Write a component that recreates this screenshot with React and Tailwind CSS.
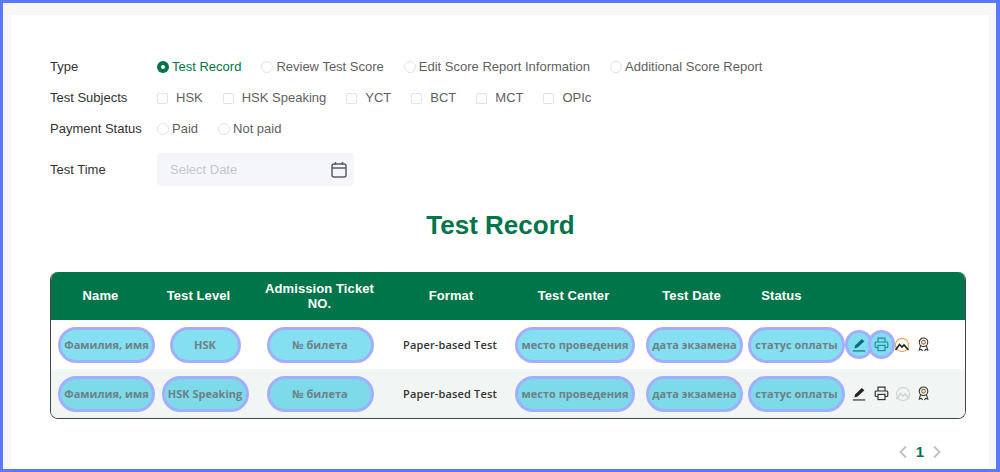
import React from "react";

const Radio = ({ label, on }) => (
  <label className="flex items-center">
    {on ? (
      <span className="w-3 h-3 rounded-full bg-[#00754a] flex items-center justify-center">
        <span className="w-1 h-1 rounded-full bg-white" />
      </span>
    ) : (
      <span className="w-3 h-3 rounded-full border border-[#e0e2e8] bg-white" />
    )}
    <span className={`ml-[3px] ${on ? "text-[#00754a]" : "text-[#5f5f5f]"}`}>{label}</span>
  </label>
);

const Check = ({ label }) => (
  <label className="flex items-center">
    <span className="w-[11px] h-[11px] rounded-[2px] border border-[#e0e2e8] bg-white" />
    <span className="ml-[8px] mr-[1px] text-[#5f5f5f]">{label}</span>
  </label>
);

const Pill = ({ children, w, bg }) => (
  <span className={`h-[36px] pt-[1px] shrink-0 flex items-center justify-center rounded-full ${bg} border-[3px] border-[#a3aefc] text-[11px] font-bold text-[#6f7f88] font-['Open_Sans',sans-serif] whitespace-nowrap ${w}`}>
    {children}
  </span>
);

const Pencil = () => (
  <svg width="14" height="14" viewBox="0 0 14 14" fill="currentColor">
    <path d="M9.8 1l2.6 2.3-6.8 6.2-3.2.9.9-3.1z" />
    <rect x="0.8" y="12.4" width="12.4" height="1.1" />
  </svg>
);
const Printer = () => (
  <svg width="15" height="15" viewBox="0 0 15 15" fill="none" stroke="currentColor" strokeWidth="1.2">
    <path d="M4 5V1.2h7V5" />
    <path d="M4 10.5H2.2a1 1 0 0 1-1-1V6a1 1 0 0 1 1-1h10.6a1 1 0 0 1 1 1v3.5a1 1 0 0 1-1 1H11" />
    <rect x="4" y="8.4" width="7" height="5.2" />
  </svg>
);
const Mountain = ({ faded }) => (
  <svg width="16" height="16" viewBox="0 0 16 16" fill="none">
    <circle cx="8" cy="8" r="6.6" stroke={faded ? "#d0d4d4" : "#efa751"} strokeWidth="1.2" />
    <path d="M1.5 13L5.5 7.5l2.5 2.5 2-2 4.5 5" stroke={faded ? "#d0d4d4" : "#222"} strokeWidth="1.6" />
  </svg>
);
const Award = () => (
  <svg width="13" height="15" viewBox="0 0 14 16" fill="none" stroke="#333" strokeWidth="1.2">
    <circle cx="7" cy="5.6" r="4.6" />
    <circle cx="7" cy="5.6" r="2" stroke="#a86a30" />
    <path d="M3.8 9.4L2.4 14l2.4-.8L6 15M10.2 9.4l1.4 4.6-2.4-.8L8 15" />
  </svg>
);

const Row = ({ level, levelW, active, bg, pill }) => (
  <div className={`flex items-center h-[49px] pl-[7px] ${bg}`}>
    <Pill w="w-[97px]" bg={pill}>Фамилия, имя</Pill>
    <div className="w-[100px] flex justify-center"><Pill w={levelW} bg={pill}>{level}</Pill></div>
    <div className="w-[130px] flex justify-center"><Pill w="w-[107px]" bg={pill}>№ билета</Pill></div>
    <div className="w-[130px] pt-[1px] text-center text-[11px] tracking-[0.15px] font-semibold text-[#333] font-['Open_Sans',sans-serif] whitespace-nowrap">Paper-based Test</div>
    <Pill w="w-[120px]" bg={pill}>место проведения</Pill>
    <Pill w="w-[97px] ml-[11px]" bg={pill}>дата экзамена</Pill>
    <Pill w="w-[97px] ml-[5px]" bg={pill}>статус оплаты</Pill>
    <div className="flex items-center">
      {active ? (
        <>
          <span className="w-[28px] h-[29px] rounded-full bg-[#80deef] border-[3px] border-[#a3aefc] text-[#0b6b7a] flex items-center justify-center"><Pencil /></span>
          <span className="w-[27px] h-[29px] -ml-[5px] rounded-full bg-[#80deef] border-[3px] border-[#a3aefc] text-[#2a8a9a] flex items-center justify-center"><Printer /></span>
          <span className="ml-[-1px] flex"><Mountain /></span>
          <span className="ml-[7px] flex"><Award /></span>
        </>
      ) : (
        <>
          <span className="ml-[7px] flex text-[#222]"><Pencil /></span>
          <span className="ml-[8px] flex text-[#333]"><Printer /></span>
          <span className="ml-[6px] flex"><Mountain faded /></span>
          <span className="ml-[6px] flex"><Award /></span>
        </>
      )}
    </div>
  </div>
);

export default function App() {
  return (
    <div className="w-[1000px] h-[472px] overflow-hidden border-[3px] border-r-[4px] border-[#5b78f8] bg-[#f7f7f7] pt-[12px] pl-[8px] font-['Liberation_Sans',sans-serif] text-[13px] text-[#333]">
      <div className="w-[978px] h-[454px] bg-white pl-[39px] pr-[23px] pt-[41px]">
        <div className="flex flex-col">
          <div className="flex items-center h-[22px]">
            <span className="w-[107px]">Type</span>
            <div className="flex gap-[20px]">
              <Radio label="Test Record" on />
              <Radio label="Review Test Score" />
              <Radio label="Edit Score Report Information" />
              <Radio label="Additional Score Report" />
            </div>
          </div>
          <div className="flex items-center h-[22px] mt-[9px]">
            <span className="w-[107px]">Test Subjects</span>
            <div className="flex gap-[19px]">
              <Check label="HSK" />
              <Check label="HSK Speaking" />
              <Check label="YCT" />
              <Check label="BCT" />
              <Check label="MCT" />
              <Check label="OPIc" />
            </div>
          </div>
          <div className="flex items-center h-[22px] mt-[9px]">
            <span className="w-[107px] whitespace-nowrap">Payment Status</span>
            <div className="flex gap-[20px]">
              <Radio label="Paid" />
              <Radio label="Not paid" />
            </div>
          </div>
          <div className="flex items-center h-[33px] mt-[13px]">
            <span className="w-[107px]">Test Time</span>
            <div className="w-[197px] h-[33px] bg-[#f5f6fa] rounded-[4px] flex items-center justify-between pl-[13px] pr-[7px]">
              <span className="text-[#c4c6cc]">Select Date</span>
              <svg width="16" height="17" viewBox="0 0 16 17" fill="none" stroke="#5a5e66" strokeWidth="1.5"><rect x="1" y="3" width="14" height="13" rx="2" /><path d="M1 7h14M4.5 1v3M11.5 1v3" /></svg>
            </div>
          </div>
        </div>
        <h1 className="text-[26px] font-bold text-[#00754a] text-center mt-[21px] leading-[36px] pr-[15px]">Test Record</h1>
        <div className="mt-[29px] w-[916px] rounded-[8px] border border-[#444] border-t-0 overflow-hidden">
          <div className="flex items-center h-[48px] bg-[#00754a] text-white font-bold text-[13px] tracking-[0.1px] text-center">
            <span className="w-[99px]">Name</span>
            <span className="w-[97px]">Test Level</span>
            <span className="w-[145px] px-[14px] leading-[15px]">Admission Ticket NO.</span>
            <span className="w-[118px]">Format</span>
            <span className="w-[127px]">Test Center</span>
            <span className="w-[109px]">Test Date</span>
            <span className="w-[71px]">Status</span>
          </div>
          <Row level="HSK" levelW="w-[71px]" active bg="bg-white" pill="bg-[#84e0f0]" />
          <Row level="HSK Speaking" levelW="w-[87px]" bg="bg-[#f1f6f5]" pill="bg-[#7ddae8]" />
        </div>
        <div className="mt-[26px] flex items-center justify-end pr-[24px] gap-[8px] w-[916px]">
          <svg width="10" height="14" viewBox="0 0 10 14" fill="none" stroke="#b9c0c8" strokeWidth="1.8"><path d="M8 1.5L2.5 7 8 12.5" /></svg>
          <span className="font-bold text-[#00754a] text-[15px] leading-[14px]">1</span>
          <svg width="10" height="14" viewBox="0 0 10 14" fill="none" stroke="#b9c0c8" strokeWidth="1.8"><path d="M2 1.5L7.5 7 2 12.5" /></svg>
        </div>
      </div>
    </div>
  );
}
